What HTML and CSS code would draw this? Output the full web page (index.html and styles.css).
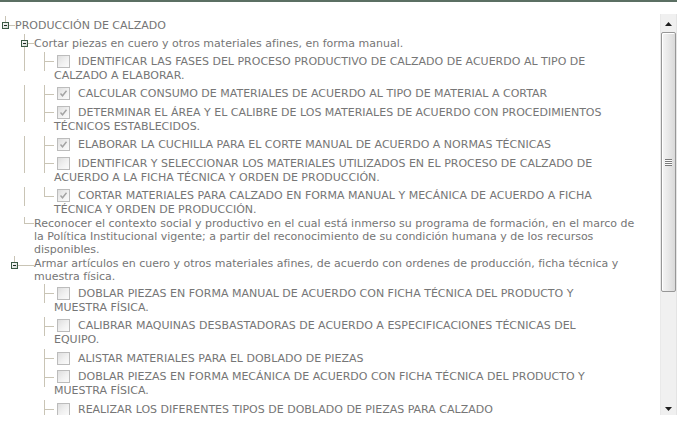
FILE: index.html
```html
<!DOCTYPE html>
<html lang="es">
<head>
<meta charset="utf-8">
<title>Producción de calzado</title>
<link rel="stylesheet" href="styles.css">
</head>
<body>
<div class="topbar"></div>
<div class="panel">
  <div class="tree">
    <div class="row">
      <svg class="conn" width="15" height="19" viewBox="0 0 15 19"><defs><linearGradient id="bx" x1="0" y1="0" x2="1" y2="1"><stop offset="0" stop-color="#ffffff"/><stop offset="1" stop-color="#cfd6d0"/></linearGradient></defs><path d="M5.5 0V6M9 9.5H15" class="ln"/><rect x="2.5" y="6.5" width="6" height="6" class="box" fill="url(#bx)"/><path d="M4 9.5H7" class="minus"/></svg>
      <div class="txt tx">PRODUCCIÓN DE CALZADO</div>
    </div>
    <div class="row">
      <span class="g g19"></span>
      <svg class="conn" width="15" height="19" viewBox="0 0 15 19"><path d="M5.5 0V6M9 9.5H15M5.5 13V19" class="ln"/><rect x="2.5" y="6.5" width="6" height="6" class="box" fill="url(#bx)"/><path d="M4 9.5H7" class="minus"/></svg>
      <div class="txt tx">Cortar piezas en cuero y otros materiales afines, en forma manual.</div>
    </div>
    <div class="row">
      <span class="g g19"></span><span class="g g20 i"></span>
      <svg class="conn" width="15" height="19" viewBox="0 0 15 19"><path d="M5.5 0V19M6 9.5H15" class="ln"/></svg>
      <div class="txt ck"><span class="cb"></span>IDENTIFICAR LAS FASES DEL PROCESO PRODUCTIVO DE CALZADO DE ACUERDO AL TIPO DE<br>CALZADO A ELABORAR.</div>
    </div>
    <div class="row">
      <span class="g g19"></span><span class="g g20 i"></span>
      <svg class="conn" width="15" height="19" viewBox="0 0 15 19"><path d="M5.5 0V19M6 9.5H15" class="ln"/></svg>
      <div class="txt ck"><span class="cb on"><svg width="11" height="11" viewBox="0 0 11 11"><path d="M2.5 5.5L4.5 7.8L8.5 2.8" class="tick"/></svg></span>CALCULAR CONSUMO DE MATERIALES DE ACUERDO AL TIPO DE MATERIAL A CORTAR</div>
    </div>
    <div class="row">
      <span class="g g19"></span><span class="g g20 i"></span>
      <svg class="conn" width="15" height="19" viewBox="0 0 15 19"><path d="M5.5 0V19M6 9.5H15" class="ln"/></svg>
      <div class="txt ck"><span class="cb on"><svg width="11" height="11" viewBox="0 0 11 11"><path d="M2.5 5.5L4.5 7.8L8.5 2.8" class="tick"/></svg></span>DETERMINAR EL ÁREA Y EL CALIBRE DE LOS MATERIALES DE ACUERDO CON PROCEDIMIENTOS<br>TÉCNICOS ESTABLECIDOS.</div>
    </div>
    <div class="row">
      <span class="g g19"></span><span class="g g20 i"></span>
      <svg class="conn" width="15" height="19" viewBox="0 0 15 19"><path d="M5.5 0V19M6 9.5H15" class="ln"/></svg>
      <div class="txt ck"><span class="cb on"><svg width="11" height="11" viewBox="0 0 11 11"><path d="M2.5 5.5L4.5 7.8L8.5 2.8" class="tick"/></svg></span>ELABORAR LA CUCHILLA PARA EL CORTE MANUAL DE ACUERDO A NORMAS TÉCNICAS</div>
    </div>
    <div class="row">
      <span class="g g19"></span><span class="g g20 i"></span>
      <svg class="conn" width="15" height="19" viewBox="0 0 15 19"><path d="M5.5 0V19M6 9.5H15" class="ln"/></svg>
      <div class="txt ck"><span class="cb"></span>IDENTIFICAR Y SELECCIONAR LOS MATERIALES UTILIZADOS EN EL PROCESO DE CALZADO DE<br>ACUERDO A LA FICHA TÉCNICA Y ORDEN DE PRODUCCIÓN.</div>
    </div>
    <div class="row">
      <span class="g g19"></span><span class="g g20 i"></span>
      <svg class="conn" width="15" height="19" viewBox="0 0 15 19"><path d="M5.5 0V10M6 9.5H15" class="ln"/></svg>
      <div class="txt ck last"><span class="cb on"><svg width="11" height="11" viewBox="0 0 11 11"><path d="M2.5 5.5L4.5 7.8L8.5 2.8" class="tick"/></svg></span>CORTAR MATERIALES PARA CALZADO EN FORMA MANUAL Y MECÁNICA DE ACUERDO A FICHA<br>TÉCNICA Y ORDEN DE PRODUCCIÓN.</div>
    </div>
    <div class="row">
      <span class="g g19"></span>
      <svg class="conn" width="15" height="19" viewBox="0 0 15 19"><path d="M5.5 0V7M6 6.5H15" class="ln"/></svg>
      <div class="txt tx multi">Reconocer el contexto social y productivo en el cual está inmerso su programa de formación, en el marco de<br>la Política Institucional vigente; a partir del reconocimiento de su condición humana y de los recursos<br>disponibles.</div>
    </div>
    <div class="row">
      <span class="g g9"></span>
      <svg class="conn wide" width="25" height="19" viewBox="0 0 25 19"><path d="M5.5 0V6M9 9.5H25" class="ln"/><rect x="2.5" y="6.5" width="6" height="6" class="box" fill="url(#bx)"/><path d="M4 9.5H7" class="minus"/></svg>
      <div class="txt tx armar">Armar artículos en cuero y otros materiales afines, de acuerdo con ordenes de producción, ficha técnica y<br>muestra física.</div>
    </div>
    <div class="row">
      <span class="g g19"></span><span class="g g20"></span>
      <svg class="conn" width="15" height="19" viewBox="0 0 15 19"><path d="M5.5 0V19M6 9.5H15" class="ln"/></svg>
      <div class="txt ck"><span class="cb"></span>DOBLAR PIEZAS EN FORMA MANUAL DE ACUERDO CON FICHA TÉCNICA DEL PRODUCTO Y<br>MUESTRA FÍSICA.</div>
    </div>
    <div class="row">
      <span class="g g19"></span><span class="g g20"></span>
      <svg class="conn" width="15" height="19" viewBox="0 0 15 19"><path d="M5.5 0V19M6 9.5H15" class="ln"/></svg>
      <div class="txt ck"><span class="cb"></span>CALIBRAR MAQUINAS DESBASTADORAS DE ACUERDO A ESPECIFICACIONES TÉCNICAS DEL<br>EQUIPO.</div>
    </div>
    <div class="row">
      <span class="g g19"></span><span class="g g20"></span>
      <svg class="conn" width="15" height="19" viewBox="0 0 15 19"><path d="M5.5 0V19M6 9.5H15" class="ln"/></svg>
      <div class="txt ck"><span class="cb"></span>ALISTAR MATERIALES PARA EL DOBLADO DE PIEZAS</div>
    </div>
    <div class="row">
      <span class="g g19"></span><span class="g g20"></span>
      <svg class="conn" width="15" height="19" viewBox="0 0 15 19"><path d="M5.5 0V19M6 9.5H15" class="ln"/></svg>
      <div class="txt ck"><span class="cb"></span>DOBLAR PIEZAS EN FORMA MECÁNICA DE ACUERDO CON FICHA TÉCNICA DEL PRODUCTO Y<br>MUESTRA FÍSICA.</div>
    </div>
    <div class="row">
      <span class="g g19"></span><span class="g g20"></span>
      <svg class="conn" width="15" height="19" viewBox="0 0 15 19"><path d="M5.5 0V19M6 9.5H15" class="ln"/></svg>
      <div class="txt ck"><span class="cb"></span>REALIZAR LOS DIFERENTES TIPOS DE DOBLADO DE PIEZAS PARA CALZADO</div>
    </div>
  </div>
  <div class="sb">
    <div class="sb-btn up"><svg width="7" height="4" viewBox="0 0 7 4"><path d="M0 4L3.5 0L7 4Z" fill="#1e1e1e"/></svg></div>
    <div class="sb-thumb"><svg width="7" height="7" viewBox="0 0 7 7"><path d="M0 0.5H7M0 2.5H7M0 4.5H7M0 6.5H7" stroke="#7a7a7a" stroke-width="1"/><path d="M0 1.5H7M0 3.5H7M0 5.5H7" stroke="#fdfdfd" stroke-width="1"/></svg></div>
    <div class="sb-track"></div>
    <div class="sb-btn down"><svg width="7" height="4" viewBox="0 0 7 4"><path d="M0 0L7 0L3.5 4Z" fill="#1e1e1e"/></svg></div>
  </div>
</div>
</body>
</html>
```

FILE: styles.css
```css
html, body {
  margin: 0;
  padding: 0;
  background: #ffffff;
  overflow: hidden;
}

body {
  font-family: "DejaVu Sans", Verdana, sans-serif;
  font-size: 11px;
  color: #767676;
}

.topbar {
  height: 2px;
  background: #5b6f63;
  margin-bottom: 12px;
}

.panel {
  display: flex;
  height: 401px;
}

.tree {
  flex: 1;
  overflow: hidden;
  padding-top: 2px;
}

.row {
  display: flex;
  align-items: flex-start;
}

.g {
  flex: none;
  height: 19px;
  margin-bottom: -1px;
}
.g9 { width: 9px; }
.g19 { width: 19px; }
.g20 { width: 20px; }
.g.i {
  background: linear-gradient(#c9c4b5, #c9c4b5) no-repeat 5px 0 / 1px 19px;
}

.conn {
  flex: none;
  display: block;
  width: 15px;
  height: 19px;
  margin-bottom: -1px;
}
.conn.wide { width: 25px; }

.ln {
  stroke: #c9c4b5;
  stroke-width: 1;
  fill: none;
}
.box {
  stroke: #3b5a45;
  stroke-width: 1;
}
.minus {
  stroke: #1d2a22;
  stroke-width: 1;
}

.txt {
  flex: 1;
  min-width: 0;
  white-space: nowrap;
}
.tx {
  line-height: 13px;
  padding: 2.5px 0;
}
.tx.multi { padding: 0; }
.tx.armar { padding: 1px 0; }

.ck {
  line-height: 14px;
  padding: 2.5px 0 2px;
}
.ck.last { padding-bottom: 0; }

.cb {
  display: inline-block;
  box-sizing: border-box;
  width: 13px;
  height: 13px;
  margin: 0 8px 0 3px;
  vertical-align: top;
  border: 1px solid #bcbcbc;
  background: linear-gradient(135deg, #dedede 0%, #f1f1f1 55%, #fbfbfb 100%);
}
.cb svg { display: block; }
.tick {
  fill: none;
  stroke: #a3a3a3;
  stroke-width: 1.4;
}

.sb {
  flex: none;
  width: 17px;
  display: flex;
  flex-direction: column;
  background: #f0f0f0;
  box-sizing: border-box;
  border-left: 1px solid #e9e9e9;
  border-right: 1px solid #e4e4e4;
}
.sb-btn {
  flex: none;
  display: flex;
  justify-content: center;
}
.sb-btn.up {
  height: 18px;
  align-items: flex-start;
  padding-top: 8px;
  box-sizing: border-box;
}
.sb-btn.down {
  height: 17px;
  align-items: flex-start;
  padding-top: 9px;
  box-sizing: border-box;
}
.sb-btn svg { display: block; }
.sb-thumb {
  flex: none;
  height: 260px;
  box-sizing: border-box;
  border: 1px solid #979797;
  border-radius: 2px;
  background: linear-gradient(90deg, #f5f5f5 0%, #e9e9e9 45%, #d9d9d9 100%);
  box-shadow: inset 1px 1px 0 #ffffff;
  display: flex;
  align-items: center;
  justify-content: center;
}
.sb-thumb svg { display: block; }
.sb-track { flex: 1; }
```
